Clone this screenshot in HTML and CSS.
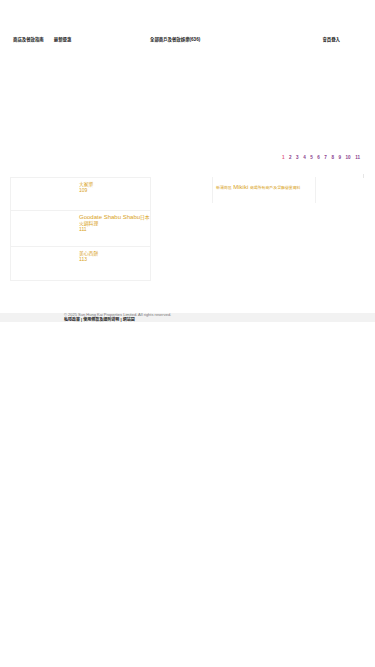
FILE: index.html
```html
<!DOCTYPE html>
<html lang="zh-Hant">
<head>
<meta charset="utf-8">
<meta name="viewport" content="width=device-width, initial-scale=1">
<title>商店及餐飲指南</title>
<link rel="stylesheet" href="styles.css">
</head>
<body>
<header class="nav">
  <div class="nav-left">
    <a class="nav-link">商店及餐飲指南</a>
    <a class="nav-link">最新優惠</a>
  </div>
  <h1 class="nav-title">全部商戶及餐飲娛樂<span class="count">(636)</span></h1>
  <a class="nav-link nav-right">會員登入</a>
</header>

<main class="main">
  <nav class="pager">
    <a class="page current">1</a>
    <a class="page">2</a>
    <a class="page">3</a>
    <a class="page">4</a>
    <a class="page">5</a>
    <a class="page">6</a>
    <a class="page">7</a>
    <a class="page">8</a>
    <a class="page">9</a>
    <a class="page">10</a>
    <a class="page">11</a>
  </nav>

  <section class="results">
    <div class="list">
      <div class="card">
        <div class="thumb"></div>
        <div class="info">
          <div class="name"><span class="zh">大家樂</span></div>
          <div class="shop-no">109</div>
        </div>
      </div>
      <div class="card">
        <div class="thumb"></div>
        <div class="info">
          <div class="name">Goodate Shabu Shabu<span class="zh">日本</span></div>
          <div class="name"><span class="zh">火鍋料理</span></div>
          <div class="shop-no">111</div>
        </div>
      </div>
      <div class="card">
        <div class="thumb"></div>
        <div class="info">
          <div class="name"><span class="zh">美心西餅</span></div>
          <div class="shop-no">113</div>
        </div>
      </div>
    </div>
    <div class="promo">
      <div class="name"><span class="zh zh-sm">新蒲崗區</span> Mikiki <span class="zh zh-sm">商場所有商戶及餐廳營業資料</span></div>
    </div>
    <div class="edge"></div>
  </section>
</main>

<footer class="footer">
  <div class="copy">© 2025 Sun Hung Kai Properties Limited. All rights reserved.</div>
  <div class="links">私隱政策 | 使用條款及細則聲明 | 網站圖</div>
</footer>
</body>
</html>
```

FILE: styles.css
```css
* { box-sizing: border-box; }

html, body {
  margin: 0;
  padding: 0;
  background: #ffffff;
}

body {
  font-family: "Liberation Sans", Arial, "Noto Sans CJK TC", sans-serif;
  color: #222;
  min-height: 667px;
}

a { text-decoration: none; color: inherit; }

.nav {
  display: flex;
  align-items: center;
  padding: 37px 35px 0 13px;
  height: 43px;
}

.nav-left {
  display: flex;
  gap: 10px;
  width: 137px;
}

.nav-link {
  font-size: 4.4px;
  line-height: 6px;
  font-weight: 700;
  color: #222;
}

.nav-title {
  margin: 0;
  font-size: 4.4px;
  line-height: 6px;
  font-weight: 700;
  color: #222;
  flex: 1;
}

.count { font-size: 4.6px; }

.nav-right { margin-left: auto; }

.main {
  padding: 112px 15px 0 10px;
}

.pager {
  display: flex;
  justify-content: flex-end;
  gap: 4.5px;
  font-size: 4.6px;
  line-height: 6px;
  font-weight: 700;
  color: #8a3d8e;
}

.page { color: #8a3d8e; }
.page.current { color: #e2577e; }

.results {
  display: flex;
  align-items: flex-start;
  margin-top: 16px;
}

.list {
  flex: none;
  width: 141px;
  border: 1px solid #f1f1f1;
}

.card {
  display: flex;
  min-height: 33px;
  border-bottom: 1px solid #f1f1f1;
  padding: 3px 0 14px;
}

.card:last-child { border-bottom: none; }

.thumb { width: 68px; flex: none; }

.info { flex: 1; min-width: 0; }

.name {
  font-size: 6px;
  line-height: 6px;
  height: 6px;
  color: #d9a323;
  white-space: nowrap;
}

.zh { font-size: 4.8px; line-height: 6px; }
.zh-sm { font-size: 3.9px; }

.shop-no {
  font-size: 5px;
  line-height: 6px;
  color: #d9a323;
}

.promo {
  flex: none;
  margin-left: 61px;
  width: 104px;
  height: 26px;
  border-left: 1px solid #f1f1f1;
  border-right: 1px solid #f1f1f1;
  padding: 7px 3px;
}

.edge {
  flex: none;
  margin-left: 47px;
  margin-top: -3px;
  width: 1px;
  height: 4px;
  background: #e6e6e6;
}

.footer {
  margin-top: 32px;
  background: #f2f2f2;
  padding: 0 0 1px 64px;
  height: 9px;
}

.copy {
  font-size: 4px;
  line-height: 4.5px;
  color: #777;
}

.links {
  font-size: 4px;
  line-height: 4.5px;
  font-weight: 700;
  color: #222;
}
```
